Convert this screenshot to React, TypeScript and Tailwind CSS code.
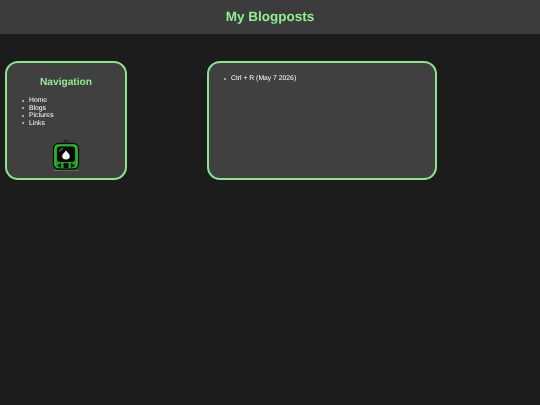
import React from 'react';

const NAV_LINKS = ['Home', 'Blogs', 'Pictures', 'Links'];

function Tamagotchi() {
  return (
    <svg width="28" height="32" viewBox="0 0 28 32" className="block">
      {/* Loop on top */}
      <circle cx="14" cy="3" r="2" fill="none" stroke="#1a1a1a" strokeWidth="1" />
      {/* Shell */}
      <rect x="1.5" y="4.5" width="25" height="25.5" rx="5" fill="#30c830" stroke="#071207" strokeWidth="1.4" />
      <rect x="3.5" y="6.5" width="21" height="22.5" rx="4" fill="#1fa01f" />
      {/* Screen */}
      <rect x="5" y="7.5" width="18" height="15.5" rx="3" fill="#080808" />
      <path d="M7.5 12.5 A4.5 4.5 0 0 1 11 9.5" fill="none" stroke="#9a9a9a" strokeWidth="1" />
      {/* Droplet */}
      <path d="M14 11.5 C15.5 13.5 17.8 15 17.8 17.5 C17.8 19.5 16 20.5 14 20.5 C12 20.5 10.2 19.5 10.2 17.5 C10.2 15 12.5 13.5 14 11.5 Z" fill="#eef5ee" />
      {/* Buttons */}
      <path d="M9 24 L5 26.5 L9 29 Z" fill="#0a0a0a" />
      <rect x="11.5" y="24" width="5" height="5" rx="1" fill="#0a0a0a" />
      <path d="M19 24 L23 26.5 L19 29 Z" fill="#0a0a0a" />
      {/* Shadow */}
      <rect x="1" y="31" width="26" height="0.7" fill="#5f7f5f" />
    </svg>
  );
}

export default function App() {
  return (
    <div className="min-h-[405px] bg-[#1c1c1c] font-['Liberation_Sans',Arial,sans-serif] text-white [text-rendering:geometricPrecision] will-change-transform">
      <header className="flex h-[33.5px] items-center justify-center bg-[#3c3c3c]">
        <h1 className="text-[13.5px] font-bold text-[#90ee90]">My Blogposts</h1>
      </header>

      <div className="flex items-start gap-[80px] pl-[5px] pt-[27.5px]">
        <nav className="h-[119px] w-[122px] rounded-[13px] border-2 border-[#8ce48c] bg-[#404040] pt-[13px]">
          <h2 className="text-center text-[10.2px] font-bold leading-[14px] text-[#90ee90]">Navigation</h2>
          <ul className="mt-[7px] pl-[15px] text-[6.8px] leading-[7.5px]">
            {NAV_LINKS.map(link => (
              <li key={link} className="flex items-center gap-[5px]">
                <span className="h-[2px] w-[2px] rounded-full bg-[#90ee90]" />
                {link}
              </li>
            ))}
          </ul>
          <div className="mt-[12px] flex justify-center">
            <Tamagotchi />
          </div>
        </nav>

        <main className="h-[119px] w-[230px] rounded-[13px] border-2 border-[#8ce48c] bg-[#404040] pl-[15px] pt-[12px]">
          <ul className="text-[6.8px] leading-[8px]">
            <li className="flex items-center gap-[5px]">
              <span className="h-[2px] w-[2px] rounded-full bg-[#90ee90]" />
              Ctrl + R (May 7 2026)
            </li>
          </ul>
        </main>
      </div>
    </div>
  );
}
